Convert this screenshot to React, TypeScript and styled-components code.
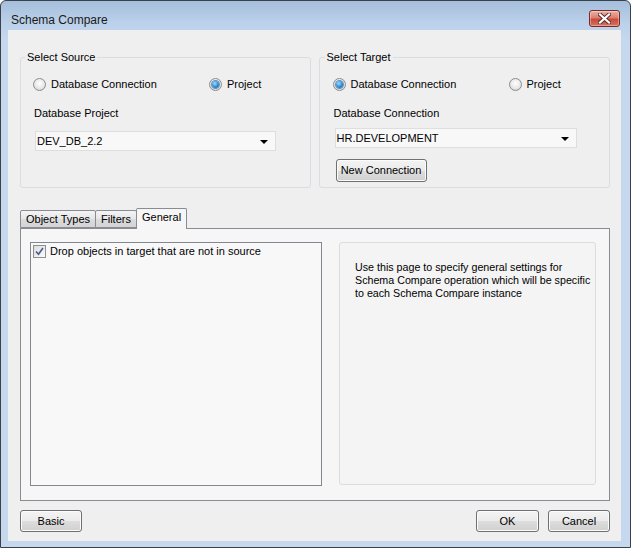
import React from "react";
import styled, { createGlobalStyle } from "styled-components";

const GlobalStyle = createGlobalStyle`
  html, body { margin: 0; padding: 0; background: #ffffff; }
  body {
    font-family: "Liberation Sans", Arial, sans-serif;
    font-size: 11px;
    color: #000;
  }
  * { box-sizing: border-box; }
`;

const Window = styled.div`
  width: 631px;
  height: 548px;
  border: 1px solid #3c4048;
  border-radius: 6px 6px 0 0;
  background: linear-gradient(#a5bedb 0px, #bcd1ea 22px, #c5d8ee 40px, #c5d8ee 100%);
  display: flex;
  flex-direction: column;
  padding: 0 9px 6px 7px;
`;

const TitleBar = styled.div`
  height: 29px;
  flex: none;
  display: flex;
  justify-content: space-between;
  align-items: flex-start;
  padding-left: 3px;
`;

const Title = styled.div`
  margin-top: 12px;
  font-size: 12px;
  line-height: 14px;
  color: #1a1a1a;
`;

const CloseButton = styled.div`
  margin-top: 9px;
  margin-right: 1px;
  width: 31px;
  height: 17px;
  border: 1px solid #7a2a22;
  border-radius: 3px;
  background: linear-gradient(#eab2a6 0%, #dc7f70 45%, #c84a3a 55%, #d9715f 100%);
  display: flex;
  align-items: center;
  justify-content: center;
  box-shadow: inset 0 0 0 1px rgba(255, 255, 255, 0.35);
`;

const Client = styled.div`
  flex: 1;
  background: #efefef;
  padding: 21px 11px 9px 12px;
  display: flex;
  flex-direction: column;
  min-height: 0;
`;

const GroupRow = styled.div`
  display: flex;
  gap: 8px;
  flex: none;
`;

const GroupBox = styled.fieldset<{ $pad: number }>`
  flex: 1;
  min-width: 0;
  margin: 0;
  border: 1px solid #d8dde2;
  border-radius: 3px;
  padding: 14px 12px 5px ${(p) => p.$pad}px;
  display: flex;
  flex-direction: column;
`;

const Legend = styled.legend`
  padding: 0 2px;
  margin-left: -8px;
  line-height: 13px;
  color: #000;
`;

const RadioRow = styled.div`
  display: grid;
  grid-template-columns: 176px 1fr;
  height: 13px;
`;

const RadioLabel = styled.label`
  display: flex;
  align-items: center;
  gap: 5px;
  line-height: 13px;
`;

const RadioCircle = styled.span`
  width: 13px;
  height: 13px;
  border-radius: 50%;
  border: 1px solid #8a8d91;
  background: radial-gradient(circle at 50% 40%, #ffffff 0%, #e8e8e8 55%, #c9c9c9 100%);
  display: flex;
  align-items: center;
  justify-content: center;
  flex: none;
`;

const RadioDot = styled.span`
  width: 7px;
  height: 7px;
  border-radius: 50%;
  background: radial-gradient(circle at 40% 35%, #9fe0ff 0%, #3c9ae0 45%, #15508e 100%);
  box-shadow: 0 0 0 1px #6d8fb5;
`;

const FieldLabel = styled.div`
  margin-top: 16px;
  line-height: 13px;
  padding-left: 1px;
`;

const Select = styled.div<{ $top: number; $w: number }>`
  margin-top: ${(p) => p.$top}px;
  margin-left: 2px;
  width: ${(p) => p.$w}px;
  height: 20px;
  border: 1px solid #dedede;
  background: #f8f8f8;
  display: flex;
  align-items: center;
  justify-content: space-between;
  padding: 0 7px 0 1px;
  line-height: 13px;
`;

const Arrow = styled.span`
  width: 0;
  height: 0;
  border-left: 4px solid transparent;
  border-right: 4px solid transparent;
  border-top: 4px solid #000;
  margin-top: 1px;
`;

const Button = styled.button<{ $w: number; $h?: number }>`
  width: ${(p) => p.$w}px;
  height: ${(p) => p.$h ?? 22}px;
  border: 1px solid #707070;
  border-radius: 3px;
  background: linear-gradient(#f3f3f3 0%, #ebebeb 50%, #dddddd 51%, #d0d0d0 100%);
  box-shadow: inset 0 0 0 1px #fbfbfb;
  font-family: "Liberation Sans", Arial, sans-serif;
  font-size: 11px;
  color: #000;
  padding: 0;
  line-height: 13px;
  flex: none;
`;

const NewConnButton = styled(Button)`
  margin-top: 11px;
  margin-left: 3px;
  align-self: flex-start;
`;

const TabStrip = styled.div`
  margin-top: 20px;
  height: 20px;
  display: flex;
  align-items: flex-end;
  flex: none;
  position: relative;
  z-index: 1;
`;

const Tab = styled.div<{ $active?: boolean }>`
  height: ${(p) => (p.$active ? 21 : 18)}px;
  margin-bottom: ${(p) => (p.$active ? -1 : 0)}px;
  margin-left: -1px;
  &:first-child { margin-left: 0; }
  padding: 2px 5px 0;
  border: 1px solid #898c95;
  border-bottom: ${(p) => (p.$active ? "none" : "1px solid #898c95")};
  border-radius: 2px 2px 0 0;
  background: ${(p) =>
    p.$active ? "#f6f6f6" : "linear-gradient(#f4f4f4, #e6e6e6 50%, #dcdcdc 51%, #d4d4d4)"};
  line-height: 13px;
  position: relative;
  z-index: ${(p) => (p.$active ? 2 : 1)};
`;

const Panel = styled.div`
  flex: 1;
  min-height: 0;
  border: 1px solid #898c95;
  background: #f6f6f6;
  padding: 13px 13px 14px 9px;
  display: flex;
  gap: 17px;
`;

const ListBox = styled.div`
  width: 292px;
  flex: none;
  border: 1px solid #828790;
  background: #f8f8f8;
  padding: 2px;
`;

const CheckRow = styled.label`
  display: flex;
  align-items: center;
  gap: 4px;
  line-height: 13px;
`;

const CheckBox = styled.span`
  width: 13px;
  height: 13px;
  border: 1px solid #8f8f8f;
  background: linear-gradient(135deg, #dcdcdc, #fbfbfb);
  display: flex;
  align-items: center;
  justify-content: center;
  flex: none;
`;

const InfoBox = styled.div`
  flex: 1;
  margin-bottom: 1px;
  border: 1px solid #dcdcdc;
  border-radius: 3px;
  background: #f4f4f4;
  padding: 18px 0 0 15px;
  font-size: 10.7px;
  line-height: 13px;
  white-space: nowrap;
`;

const Footer = styled.div`
  margin-top: 9px;
  display: flex;
  justify-content: space-between;
  flex: none;
`;

const ButtonGroup = styled.div`
  display: flex;
  gap: 9px;
`;

function Radio({ on, label }: { on?: boolean; label: string }) {
  return (
    <RadioLabel>
      <RadioCircle>{on && <RadioDot />}</RadioCircle>
      {label}
    </RadioLabel>
  );
}

export default function App() {
  return (
    <>
      <GlobalStyle />
      <Window>
        <TitleBar>
          <Title>Schema Compare</Title>
          <CloseButton>
            <svg width="13" height="11" viewBox="0 0 13 11">
              <path d="M2 1.5 L11 9.5 M11 1.5 L2 9.5" stroke="#5a2a25" strokeWidth="4" strokeLinecap="square" />
              <path d="M2 1.5 L11 9.5 M11 1.5 L2 9.5" stroke="#ffffff" strokeWidth="2.2" strokeLinecap="square" />
            </svg>
          </CloseButton>
        </TitleBar>
        <Client>
          <GroupRow>
            <GroupBox $pad={12}>
              <Legend>Select Source</Legend>
              <RadioRow>
                <Radio label="Database Connection" />
                <Radio on label="Project" />
              </RadioRow>
              <FieldLabel>Database Project</FieldLabel>
              <Select $top={11} $w={241}>
                <span>DEV_DB_2.2</span>
                <Arrow />
              </Select>
            </GroupBox>
            <GroupBox $pad={13}>
              <Legend>Select Target</Legend>
              <RadioRow>
                <Radio on label="Database Connection" />
                <Radio label="Project" />
              </RadioRow>
              <FieldLabel>Database Connection</FieldLabel>
              <Select $top={8} $w={242}>
                <span>HR.DEVELOPMENT</span>
                <Arrow />
              </Select>
              <NewConnButton $w={91} $h={23}>New Connection</NewConnButton>
            </GroupBox>
          </GroupRow>
          <TabStrip>
            <Tab>Object Types</Tab>
            <Tab>Filters</Tab>
            <Tab $active>General</Tab>
          </TabStrip>
          <Panel>
            <ListBox>
              <CheckRow>
                <CheckBox>
                  <svg width="9" height="9" viewBox="0 0 9 9">
                    <path d="M1 4.5 L3.5 7.2 L8 1" fill="none" stroke="#4a5c8c" strokeWidth="1.6" />
                  </svg>
                </CheckBox>
                Drop objects in target that are not in source
              </CheckRow>
            </ListBox>
            <InfoBox>
              Use this page to specify general settings for
              <br />
              Schema Compare operation which will be specific
              <br />
              to each Schema Compare instance
            </InfoBox>
          </Panel>
          <Footer>
            <Button $w={62}>Basic</Button>
            <ButtonGroup>
              <Button $w={63}>OK</Button>
              <Button $w={62}>Cancel</Button>
            </ButtonGroup>
          </Footer>
        </Client>
      </Window>
    </>
  );
}
